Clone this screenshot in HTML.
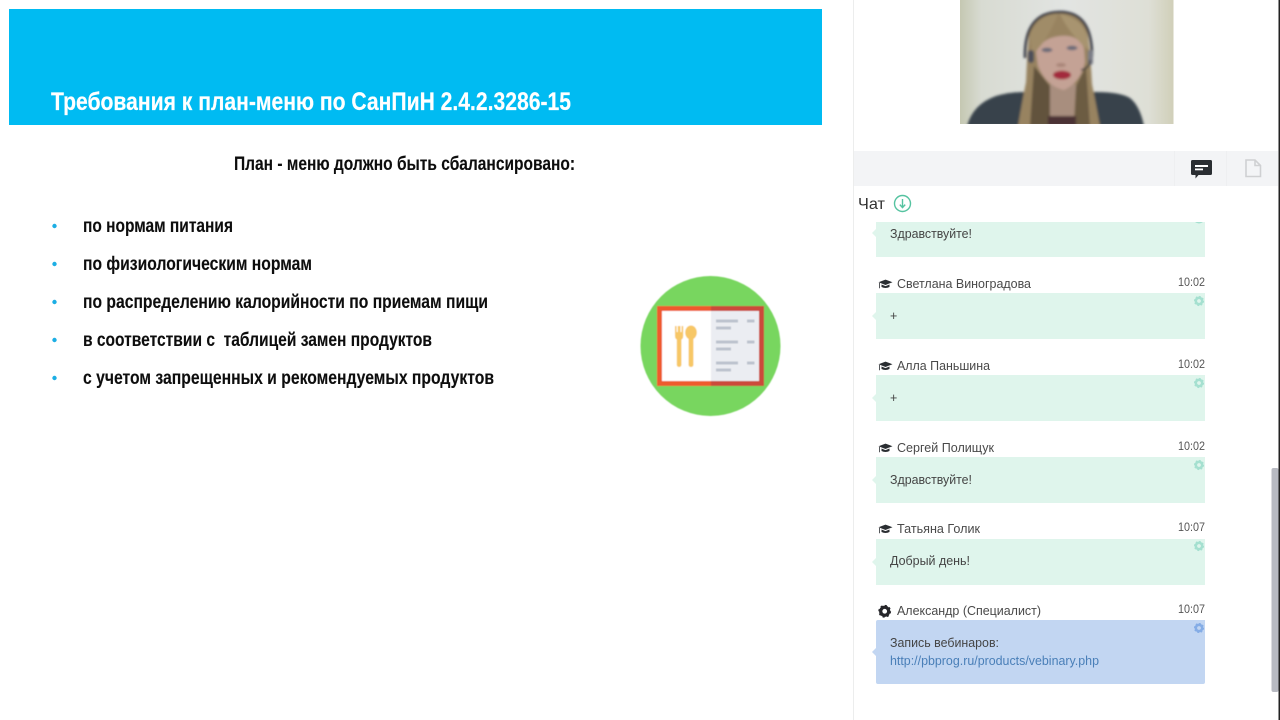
<!DOCTYPE html>
<html lang="ru">
<head>
<meta charset="utf-8">
<title>Вебинар</title>
<style>
html,body{margin:0;padding:0;width:1280px;height:720px;overflow:hidden;background:#fff}
svg{display:block}
text{font-family:"Liberation Sans",sans-serif}
.s{font-weight:bold;fill:#0f0f0f;font-size:19px;stroke:#0f0f0f;stroke-width:.12px}
.n{font-size:13px;fill:#4a4a4a}
.t{font-size:12px;fill:#555}
.m{font-size:12.5px;fill:#454545}
</style>
</head>
<body>
<svg width="1280" height="720" viewBox="0 0 1280 720" xmlns="http://www.w3.org/2000/svg">
<defs>
<filter id="b0" x="-5%" y="-5%" width="110%" height="110%"><feGaussianBlur stdDeviation="0.25"/></filter>
<filter id="b1" x="-5%" y="-5%" width="110%" height="110%"><feGaussianBlur stdDeviation="0.3"/></filter>
<filter id="b2" x="-10%" y="-10%" width="120%" height="120%"><feGaussianBlur stdDeviation="1.4"/></filter>
<filter id="b3" x="-10%" y="-10%" width="120%" height="120%"><feGaussianBlur stdDeviation="0.6"/></filter>
<linearGradient id="wall" x1="0" x2="1" y1="0" y2="0">
<stop offset="0" stop-color="#c5c8b2"/><stop offset=".1" stop-color="#d8dbd2"/><stop offset=".5" stop-color="#e2e4e2"/><stop offset=".88" stop-color="#dedfd6"/><stop offset="1" stop-color="#d0cfb8"/>
</linearGradient>
<g id="gear">
<circle r="3.2" fill="none" stroke-width="2.6"/>
<circle r="4.4" fill="none" stroke-width="1.4" stroke-dasharray="1.6 1.85"/>
</g>
<g id="cap">
<path d="M-7 -1.8 L0 -4.4 L7 -1.8 L0 1 Z M-4 0.5 L0 2.1 L4 0.5 L4 3 Q0 5 -4 3 Z M-6.5 -1 L-5.7 -1 L-5.7 4.2 L-6.5 4.2 Z" fill="#2b2d31"/>
</g>
</defs>

<!-- slide -->
<rect x="9" y="9" width="813" height="116" fill="#00bbf2"/>
<g filter="url(#b1)">
<text x="51" y="110" font-size="25" font-weight="bold" fill="#fff" stroke="#fff" stroke-width=".2" textLength="520" lengthAdjust="spacingAndGlyphs">Требования к план-меню по СанПиН 2.4.2.3286-15</text>
<text class="s" x="234" y="170" textLength="341" lengthAdjust="spacingAndGlyphs">План - меню должно быть сбалансировано:</text>
<text class="s" x="83" y="232" textLength="150" lengthAdjust="spacingAndGlyphs">по нормам питания</text>
<text class="s" x="83" y="270" textLength="229" lengthAdjust="spacingAndGlyphs">по физиологическим нормам</text>
<text class="s" x="83" y="308" textLength="405" lengthAdjust="spacingAndGlyphs">по распределению калорийности по приемам пищи</text>
<text class="s" x="83" y="346" textLength="349" lengthAdjust="spacingAndGlyphs">в соответствии с &#160;таблицей замен продуктов</text>
<text class="s" x="83" y="384" textLength="411" lengthAdjust="spacingAndGlyphs">с учетом запрещенных и рекомендуемых продуктов</text>
</g>
<g fill="#1eaee4" filter="url(#b0)">
<circle cx="54.5" cy="226" r="2.2"/><circle cx="54.5" cy="264" r="2.2"/><circle cx="54.5" cy="302" r="2.2"/><circle cx="54.5" cy="340" r="2.2"/><circle cx="54.5" cy="378" r="2.2"/>
</g>

<!-- menu icon -->
<g filter="url(#b3)">
<circle cx="710.5" cy="346" r="70" fill="#78d65e"/>
<rect x="657" y="306" width="54" height="80" fill="#ee5a2e"/>
<rect x="711" y="306" width="53" height="80" fill="#cb4a3a"/>
<rect x="662" y="311" width="49" height="70" fill="#fff"/>
<rect x="711" y="311" width="48" height="70" fill="#ebedf2"/>
<g fill="#f7c766">
<rect x="676.8" y="334" width="4.6" height="33" rx="2.2"/>
<path d="M675 326 h1.6 v6 h1.2 v-6 h2.6 v6 h1.2 v-6 h1.6 v10 q0 4 -4 4 q-4.2 0 -4.2 -4 Z"/>
<rect x="688.6" y="334" width="4.8" height="33" rx="2.2"/>
<ellipse cx="691" cy="332.5" rx="5.8" ry="7"/>
</g>
<g fill="#bcc2cd">
<rect x="716" y="319.5" width="22" height="3"/><rect x="747" y="319.5" width="7.5" height="3"/><rect x="716" y="326.5" width="15" height="3"/>
<rect x="716" y="340.5" width="22" height="3"/><rect x="747" y="340.5" width="7.5" height="3"/><rect x="716" y="347.5" width="15" height="3"/>
<rect x="716" y="361.5" width="22" height="3"/><rect x="747" y="361.5" width="7.5" height="3"/><rect x="716" y="368.5" width="15" height="3"/>
</g>
</g>

<!-- side panel -->
<rect x="853" y="0" width="1" height="720" fill="#eceded"/>

<!-- video -->
<svg x="960" y="0" width="213.5" height="124" viewBox="960 0 213.5 124">
<rect x="960" y="0" width="214" height="124" fill="url(#wall)"/>
<g filter="url(#b2)">
<!-- shoulders -->
<path d="M967 126 Q973 104 996 96 Q1010 92 1024 92 L1096 92 Q1120 92 1130 98 Q1140 106 1144 126 Z" fill="#37424c"/>
<!-- hair back -->
<path d="M1029 34 Q1036 11 1060 11 Q1084 12 1088 36 Q1091 62 1092 84 Q1096 104 1100 126 L1018 126 Q1022 102 1026 82 Q1027 56 1029 34 Z" fill="#988360"/>
<!-- darker inner hair -->
<path d="M1034 66 L1030 126 L1050 126 L1050 86 Z" fill="#62533c"/>
<path d="M1086 66 L1090 126 L1074 126 L1076 86 Z" fill="#6c5b42"/>
<!-- neck and chest -->
<path d="M1050 84 L1076 84 L1074 120 L1050 120 Z" fill="#a88e7e"/>
<path d="M1048 116 L1076 116 L1076 126 L1048 126 Z" fill="#4c3336"/>
<!-- face -->
<path d="M1036 52 Q1042 38 1060 36 Q1078 34 1084 48 L1085 62 Q1081 82 1064 90 Q1046 86 1038 66 Z" fill="#c4a295"/>
<!-- bangs -->
<path d="M1032 54 Q1046 44 1058 14 Q1040 14 1030 34 Z" fill="#a08c68"/>
<path d="M1060 14 Q1068 32 1088 50 Q1090 20 1060 14 Z" fill="#a8946f"/>
<!-- brows/eyes -->
<ellipse cx="1047" cy="50" rx="5.5" ry="2.2" fill="#6a6a78"/>
<ellipse cx="1072" cy="48" rx="5.5" ry="2.2" fill="#6a6a78"/>
<ellipse cx="1061" cy="65" rx="5" ry="2" fill="#a98578"/>
<ellipse cx="1062" cy="75" rx="9" ry="4.4" fill="#a32b3c"/>
<!-- headset -->
<path d="M1025 58 Q1024 12 1060 12 Q1092 12 1092 56" fill="none" stroke="#353843" stroke-width="2.6"/>
<rect x="1028" y="50" width="6" height="13" rx="3" fill="#4d505a"/>
<rect x="1088" y="50" width="5" height="15" rx="2.5" fill="#7a7d86"/>
<path d="M1090 60 Q1090 68 1081 70" fill="none" stroke="#33353c" stroke-width="1.5"/>
</g>
</svg>

<!-- tab bar -->
<rect x="854" y="151" width="424" height="35" fill="#f3f4f6"/>
<rect x="1174" y="151" width="1" height="35" fill="#eeeff1"/>
<rect x="1226" y="151" width="1" height="35" fill="#eeeff1"/>
<g filter="url(#b0)">
<path d="M1192.5 160 H1210.5 A1.5 1.5 0 0 1 1212 161.5 V173.5 A1.5 1.5 0 0 1 1210.5 175 H1198.5 L1195.5 178.5 L1195.5 175 H1192.5 A1.5 1.5 0 0 1 1191 173.5 V161.5 A1.5 1.5 0 0 1 1192.5 160 Z" fill="#2a2d31"/>
<rect x="1195" y="165" width="13" height="2" fill="#fff"/>
<rect x="1195" y="168.5" width="8" height="1.8" fill="#fff"/>
<path d="M1246 160 H1255 L1260.5 165.5 V176.5 H1246 Z M1255 160 V165.5 H1260.5" fill="none" stroke="#cfd0d2" stroke-width="1.6"/>
</g>

<!-- chat header -->
<g filter="url(#b0)">
<text x="858" y="209" font-size="16" fill="#333" textLength="27" lengthAdjust="spacingAndGlyphs">Чат</text>
<circle cx="902.5" cy="203.5" r="8" fill="none" stroke="#55c3a0" stroke-width="1.4"/>
<path d="M902.5 199 V207 M899.8 204.6 L902.5 207.6 L905.2 204.6" fill="none" stroke="#55c3a0" stroke-width="1.4"/>
</g>

<!-- bubbles -->
<g fill="#dff5ec">
<rect x="876" y="222" width="329" height="35"/><path d="M876 229 l-4 4 l4 4Z"/>
<rect x="876" y="293" width="329" height="46"/><path d="M876 312 l-4 4 l4 4Z"/>
<rect x="876" y="375" width="329" height="46"/><path d="M876 394 l-4 4 l4 4Z"/>
<rect x="876" y="457" width="329" height="46"/><path d="M876 476 l-4 4 l4 4Z"/>
<rect x="876" y="539" width="329" height="46"/><path d="M876 558 l-4 4 l4 4Z"/>
</g>
<path d="M878 620 H1205 V682 a2 2 0 0 1 -2 2 H878 a2 2 0 0 1 -2 -2 V622 a2 2 0 0 1 2 -2Z" fill="#c2d6f2"/>
<path d="M876 648 l-4 4 l4 4Z" fill="#c2d6f2"/>

<!-- small gears -->
<g stroke="#a5e0d0" filter="url(#b0)">
<use href="#gear" x="1199" y="301"/><use href="#gear" x="1199" y="383"/><use href="#gear" x="1199" y="465"/><use href="#gear" x="1199" y="546"/>
<path d="M1195 222 Q1199 225 1203 222" fill="#a5e0d0" stroke="none"/>
</g>
<g stroke="#85ade6" filter="url(#b0)"><use href="#gear" x="1199" y="628"/></g>

<!-- role icons -->
<g filter="url(#b0)">
<use href="#cap" x="885.5" y="284"/>
<use href="#cap" x="885.5" y="366"/>
<use href="#cap" x="885.5" y="448"/>
<use href="#cap" x="885.5" y="529"/>
<g stroke="#26282c" transform="translate(884.7 611.3) scale(1.25)"><use href="#gear"/></g>
</g>

<g filter="url(#b0)">
<!-- names -->
<text class="n" x="897" y="288" textLength="134" lengthAdjust="spacingAndGlyphs">Светлана Виноградова</text>
<text class="n" x="897" y="370" textLength="93" lengthAdjust="spacingAndGlyphs">Алла Паньшина</text>
<text class="n" x="897" y="452" textLength="97" lengthAdjust="spacingAndGlyphs">Сергей Полищук</text>
<text class="n" x="897" y="533" textLength="83" lengthAdjust="spacingAndGlyphs">Татьяна Голик</text>
<text class="n" x="897" y="615" textLength="144" lengthAdjust="spacingAndGlyphs">Александр (Специалист)</text>

<!-- times -->
<text class="t" x="1178" y="286" textLength="27" lengthAdjust="spacingAndGlyphs">10:02</text>
<text class="t" x="1178" y="368" textLength="27" lengthAdjust="spacingAndGlyphs">10:02</text>
<text class="t" x="1178" y="450" textLength="27" lengthAdjust="spacingAndGlyphs">10:02</text>
<text class="t" x="1178" y="531" textLength="27" lengthAdjust="spacingAndGlyphs">10:07</text>
<text class="t" x="1178" y="613" textLength="27" lengthAdjust="spacingAndGlyphs">10:07</text>

<!-- messages -->
<text class="m" x="890" y="238" textLength="82" lengthAdjust="spacingAndGlyphs">Здравствуйте!</text>
<text class="m" x="890" y="320" font-size="14">+</text>
<text class="m" x="890" y="402" font-size="14">+</text>
<text class="m" x="890" y="484" textLength="82" lengthAdjust="spacingAndGlyphs">Здравствуйте!</text>
<text class="m" x="890" y="565" textLength="80" lengthAdjust="spacingAndGlyphs">Добрый день!</text>
<text class="m" x="890" y="647" textLength="109" lengthAdjust="spacingAndGlyphs">Запись вебинаров:</text>
<text class="m" x="890" y="665" style="fill:#4a7fb8" textLength="209" lengthAdjust="spacingAndGlyphs">http://pbprog.ru/products/vebinary.php</text>
</g>

<!-- scrollbar and edge -->
<rect x="1271.5" y="468" width="7" height="224" rx="2" fill="#b8bac2"/>
<rect x="1278.5" y="0" width="1.5" height="720" fill="#222"/>
</svg>
</body>
</html>
